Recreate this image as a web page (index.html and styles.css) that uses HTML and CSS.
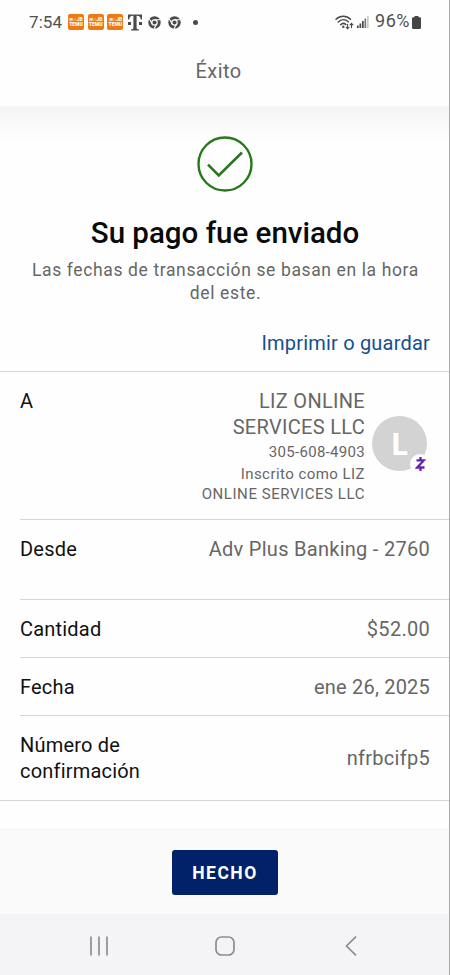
FILE: index.html
```html
<!DOCTYPE html>
<html lang="es">
<head>
<meta charset="utf-8">
<title>Éxito</title>
<link rel="stylesheet" href="styles.css">
</head>
<body>
<div class="screen">
  <div class="status">
    <span class="clock">7:54</span>
    <span class="temu"><i>≋∩JB</i><b>TEMU</b></span>
    <span class="temu"><i>≋∩JB</i><b>TEMU</b></span>
    <span class="temu"><i>≋∩JB</i><b>TEMU</b></span>
    <svg class="tmo" width="14" height="17" viewBox="0 0 14 17" fill="#4a4a4a"><path d="M0 .5h14v5h-1.200C12.600 3 11.500 1.700 9 1.700H8.600v11.800c0 1.500.6 1.900 2.400 1.900v1.100H3v-1.100c1.800 0 2.400-.4 2.400-1.900V1.700H5C2.500 1.700 1.400 3 1.200 5.500H0zM0 8h3v3H0zM11 8h3v3h-3z"/></svg>
    <svg class="chrome" width="13" height="13" viewBox="0 0 13 13"><use href="#chrome"/></svg>
    <svg class="chrome second" width="13" height="13" viewBox="0 0 13 13"><g id="chrome"><circle cx="6.500" cy="6.500" r="6.200" fill="#4a4a4a"/><circle cx="6.500" cy="6.500" r="2.700" fill="none" stroke="#fdfdfd" stroke-width="1.200"/><path d="M6.500 3.800h5.600M4.200 7.900L1.400 3M8.800 7.900L6 12.700" stroke="#fdfdfd" stroke-width="1.100"/></g></svg>
    <span class="dot"></span>
    <span class="spacer"></span>
    <svg class="wifi" width="19" height="15" viewBox="0 0 19 15" fill="none" stroke="#4a4a4a" stroke-linecap="round" stroke-width="1.500"><path d="M1 4.300C5.300.2 11.400.2 15.500 4.300M3.200 7C6.300 4 10.300 4 13.300 6.800M5.600 9.700c1.700-1.600 3.700-1.600 5.200-.3"/><circle cx="8.300" cy="11.700" r=".5" fill="#4a4a4a"/><path d="M12.600 9.300v4.200M11.200 12.300l1.400 1.400 1.400-1.400M16.500 12.700V8.600M15.100 9.800l1.400-1.400 1.400 1.400" stroke-width="1.100"/></svg>
    <svg class="signal" width="12" height="12" viewBox="0 0 12 12" fill="#4a4a4a"><path d="M0 9.500h1.700V12H0zM2.500 7.500h1.700V12H2.500zM5 5h1.700v7H5z"/><path d="M7.500 2.500h1.700V12H7.500z" fill="#777"/><path d="M10 0h1.700v12H10z" fill="#ccc"/></svg>
    <span class="percent">96%</span>
    <svg width="9" height="13" viewBox="0 0 9 13" fill="#454545"><path d="M2.500 0h4v1.200h1.300q1.200 0 1.200 1.200v9.400q0 1.200-1.200 1.200H1.200Q0 13 0 11.800V2.400q0-1.200 1.200-1.200h1.300z"/></svg>
  </div>
  <header class="title">Éxito</header>
  <main>
    <section class="hero">
      <svg class="check" width="56" height="56" viewBox="0 0 56 56" fill="none" stroke="#26781a"><circle cx="28" cy="28" r="26.500" stroke-width="2.400"/><path d="M11 28.700L21.700 39.500 45 16.500" stroke-width="2.600"/></svg>
      <h1>Su pago fue enviado</h1>
      <p>Las fechas de transacción se basan en la hora<br>del este.</p>
      <a class="print">Imprimir o guardar</a>
    </section>
    <dl class="details">
      <div class="row payee">
        <dt>A</dt>
        <dd>
          <div class="recipient">
            <div class="name">LIZ ONLINE<br>SERVICES LLC</div>
            <div class="phone">305-608-4903</div>
            <div class="enrolled">Inscrito como LIZ</div>
            <div class="enrolled company">ONLINE SERVICES LLC</div>
          </div>
          <div class="avatar">L<span class="badge"><svg width="11" height="16" viewBox="0 0 11 16" fill="none" stroke="#6722b4" stroke-width="2.300"><path d="M1.500 4.400h7.200L2.300 11.500h7.200"/><path d="M5.500 1v3M5.500 12v3"/></svg></span></div>
        </dd>
      </div>
      <div class="row from"><dt>Desde</dt><dd>Adv Plus Banking - 2760</dd></div>
      <div class="row"><dt>Cantidad</dt><dd>$52.00</dd></div>
      <div class="row"><dt>Fecha</dt><dd class="date">ene 26, 2025</dd></div>
      <div class="row confirm"><dt>Número de<br>confirmación</dt><dd>nfrbcifp5</dd></div>
    </dl>
  </main>
  <footer class="actions"><button>HECHO</button></footer>
  <nav>
    <svg width="20" height="20" viewBox="0 0 20 20" stroke="#8d8d90" stroke-width="1.700"><path d="M2 .5v19M10 .5v19M18 .5v19"/></svg>
    <svg width="20" height="20" viewBox="0 0 20 20" fill="none" stroke="#8d8d90" stroke-width="1.700"><rect x="1" y="1" width="18" height="18" rx="5.500"/></svg>
    <svg class="back" width="12" height="20" viewBox="0 0 12 20" fill="none" stroke="#8d8d90" stroke-width="1.700"><path d="M11 .7L1.500 10l9.500 9.300"/></svg>
  </nav>
</div>
</body>
</html>
```
FILE: styles.css
```css
* { box-sizing: border-box; }
body { margin: 0; background: #fff; font-family: Roboto, sans-serif; }
.screen { width: 450px; height: 975px; display: flex; flex-direction: column; border-right: 1px solid #aaa; background: #fefefe; overflow: hidden; color: #666; }
.status { height: 44px; flex: none; display: flex; align-items: center; padding: 0 28px 0 29px; color: #505050; }
.clock { font-size: 17px; width: 39px; letter-spacing: .1px; }
.temu { width: 16px; height: 16px; margin-right: 3.700px; border-radius: 2px; background: #ef7912; color: #fff; display: flex; flex-direction: column; align-items: center; justify-content: center; font: 700 5px/5px Roboto, sans-serif; }
.temu i { font-style: normal; }
.tmo { margin: 0 6px 0 .5px; }
.second { margin-left: 7px; }
.dot { width: 5px; height: 5px; margin-left: 12px; border-radius: 50%; background: #4a4a4a; }
.spacer { flex: 1; }
.wifi { margin-right: 3px; }
.signal { margin-right: 6px; }
.percent { font-size: 18px; line-height: 20px; letter-spacing: .5px; margin: -2px 2px 0 0; }
.title { height: 62px; flex: none; padding: 13px 12px 0 0; text-align: center; font-size: 20px; line-height: 28px; letter-spacing: .4px; }
main { height: 723px; flex: none; background: linear-gradient(#f4f4f4, #fefefe 36px); }
.hero { height: 265px; padding: 30px 19px 0 20px; display: flex; flex-direction: column; align-items: center; }
h1 { margin: 22px 0 0; height: 38px; font-size: 29.500px; line-height: 38px; font-weight: 500; color: #0a0a0a; white-space: nowrap; }
p { margin: 7px 0 0; padding-left: 1px; text-align: center; font-size: 17.500px; line-height: 23px; letter-spacing: .62px; white-space: nowrap; }
.print { align-self: flex-end; margin-top: 24px; color: #14508f; font-size: 20px; line-height: 28px; letter-spacing: .2px; }
.details { margin: 0; border-top: 1px solid #d6d6d6; border-bottom: 1px solid #d6d6d6; font-size: 20px; line-height: 26px; letter-spacing: .2px; }
.row { height: 58px; margin-left: 20px; padding-right: 19px; display: flex; justify-content: space-between; align-items: center; }
.row + .row { border-top: 1px solid #d6d6d6; }
dt { color: #111; }
dd { margin: 0; text-align: right; letter-spacing: .28px; }
.payee { height: 147px; padding: 16px 22px 0 0; align-items: flex-start; }
.payee dd { display: flex; }
.name { letter-spacing: .3px; }
.phone { font-size: 15px; line-height: 24px; letter-spacing: .3px; }
.enrolled { font-size: 15px; line-height: 20px; letter-spacing: .45px; }
.company { letter-spacing: .56px; }
.avatar { position: relative; width: 55px; height: 55px; margin: 28px 0 0 7px; border-radius: 50%; background: #d3d3d3; color: #fff; font: 700 31px/55px "Open Sans", sans-serif; text-align: center; letter-spacing: 0; }
.badge { position: absolute; left: 38px; top: 38px; width: 20px; height: 20px; border-radius: 50%; background: #fefefe; display: flex; align-items: center; justify-content: center; }
.from { height: 80px; padding-top: 16px; align-items: flex-start; }
.date { letter-spacing: .2px; }
.confirm { height: 85px; }
.actions { height: 85px; flex: none; display: flex; justify-content: center; padding-top: 19.500px; background: #fafafa; border-top: 1px solid #f6f6f6; }
button { width: 106px; height: 45px; padding: 2px 0 0 1px; border: 0; border-radius: 3px; background: #012169; color: #fff; font: 700 17.500px Roboto, sans-serif; letter-spacing: 1.500px; }
nav { height: 61px; flex: none; display: flex; align-items: center; padding: 2px 0 0 89px; background: #f4f4f7; gap: 106px; }
.back { margin-left: 4px; }
```
